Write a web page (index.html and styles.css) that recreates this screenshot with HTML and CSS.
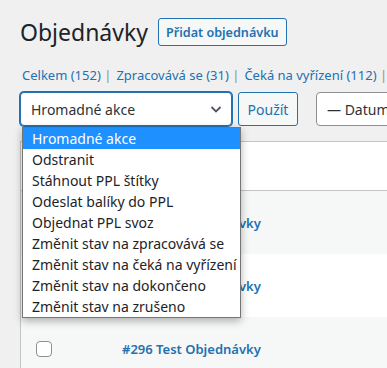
FILE: index.html
```html
<!DOCTYPE html>
<html lang="cs">
<head>
    <meta charset="UTF-8">
    <meta name="viewport" content="width=device-width, initial-scale=1.0">
    <title>Objednávky</title>
    <link rel="stylesheet" href="styles.css">
</head>
<body>
    <div class="wrap">
        <div class="page-head">
            <h1>Objednávky</h1>
            <a class="btn add-new" href="#">Přidat objednávku</a>
        </div>

        <ul class="subsubsub">
            <li><a href="#">Celkem (152)</a> |</li>
            <li><a href="#">Zpracovává se (31)</a> |</li>
            <li><a href="#">Čeká na vyřízení (112)</a> |</li>
        </ul>

        <div class="tablenav">
            <div class="select focused">
                <span>Hromadné akce</span>
                <svg class="chevron" width="14" height="14" viewBox="0 0 14 14"><path d="M2.5 5l4.5 4.5L11.5 5" fill="none" stroke="#50575e" stroke-width="1.8"/></svg>
            </div>
            <a class="btn apply" href="#">Použít</a>
            <div class="select date"><span>— Datum</span></div>
        </div>

        <table class="orders">
            <thead>
                <tr><th class="check"></th><th></th></tr>
            </thead>
            <tbody>
                <tr class="alt"><td class="check"><span class="checkbox"></span></td><td><a href="#">#298 Test Objednávky</a></td></tr>
                <tr><td class="check"><span class="checkbox"></span></td><td><a href="#">#297 Test Objednávky</a></td></tr>
                <tr class="alt"><td class="check"><span class="checkbox"></span></td><td><a href="#">#296 Test Objednávky</a></td></tr>
            </tbody>
        </table>

        <!-- otevřený seznam hromadných akcí -->
        <ul class="dropdown">
            <li class="selected">Hromadné akce</li>
            <li>Odstranit</li>
            <li>Stáhnout PPL štítky</li>
            <li>Odeslat balíky do PPL</li>
            <li>Objednat PPL svoz</li>
            <li>Změnit stav na zpracovává se</li>
            <li>Změnit stav na čeká na vyřízení</li>
            <li>Změnit stav na dokončeno</li>
            <li>Změnit stav na zrušeno</li>
        </ul>
    </div>
</body>
</html>
```

FILE: styles.css
```css
body {
    margin: 0;
    background: #f0f0f1;
    color: #3c434a;
    font-family: "Noto Sans", "Open Sans", sans-serif;
    font-size: 13px;
    overflow: hidden;
}
a {
    color: #2271b1;
    text-decoration: none;
}
.wrap {
    position: relative;
    padding: 12px 0 0 20px;
}
.page-head {
    display: flex;
    align-items: center;
    gap: 10px;
    height: 40px;
}
h1 {
    margin: 0;
    font-size: 23px;
    font-weight: 400;
    color: #1d2327;
}
.btn {
    display: inline-flex;
    align-items: center;
    flex-shrink: 0;
    border: 1px solid #2271b1;
    border-radius: 3px;
    background: #f6f7f7;
    color: #2271b1;
    box-sizing: border-box;
}
.add-new {
    height: 28px;
    padding: 0 7px;
    font-weight: 600;
    font-size: 12.6px;
}
.subsubsub {
    list-style: none;
    margin: 14px 0 0 2px;
    padding: 0;
    display: flex;
    gap: 5px;
    white-space: nowrap;
    color: #8c8f94;
}
.subsubsub a {
    color: #2271b1;
}
.tablenav {
    display: flex;
    gap: 6px;
    margin-top: 8px;
    height: 34px;
}
.select {
    display: flex;
    align-items: center;
    justify-content: space-between;
    flex-shrink: 0;
    box-sizing: border-box;
    height: 34px;
    padding: 0 8px 0 10px;
    border: 1px solid #8c8f94;
    border-radius: 4px;
    background: #fff;
    color: #2c3338;
    font-size: 14px;
}
.select.focused {
    width: 212px;
    border-color: #2271b1;
    box-shadow: 0 0 0 1px #2271b1;
}
.apply {
    width: 60px;
    justify-content: center;
    font-size: 14px;
}
.select.date {
    margin-left: 12px;
    width: 120px;
}
.orders {
    margin-top: 15px;
    width: 420px;
    table-layout: fixed;
    border: 1px solid #c3c4c7;
    border-collapse: collapse;
    background: #fff;
}
.orders th {
    height: 48px;
    padding: 0;
    border-bottom: 1px solid #c3c4c7;
}
.orders td {
    height: 63px;
    padding: 0;
    font-size: 13px;
    font-weight: 600;
}
.orders tr.alt td {
    background: #f6f7f7;
}
.orders .check {
    width: 86px;
    padding-left: 15px;
    text-align: left;
}
.checkbox {
    display: block;
    width: 16px;
    height: 16px;
    box-sizing: border-box;
    border: 1px solid #8c8f94;
    border-radius: 4px;
    background: #fff;
}
.dropdown {
    position: absolute;
    left: 22px;
    top: 127px;
    width: 219px;
    box-sizing: border-box;
    margin: 0;
    padding: 0;
    list-style: none;
    background: #fff;
    border: 1px solid #767676;
    box-shadow: 0 3px 8px rgba(0, 0, 0, 0.3);
    font-size: 14px;
    color: #1d2327;
}
.dropdown li {
    height: 21px;
    line-height: 21px;
    padding-left: 9px;
    white-space: nowrap;
}
.dropdown li.selected {
    background: #1e90ff;
    color: #fff;
}
```
